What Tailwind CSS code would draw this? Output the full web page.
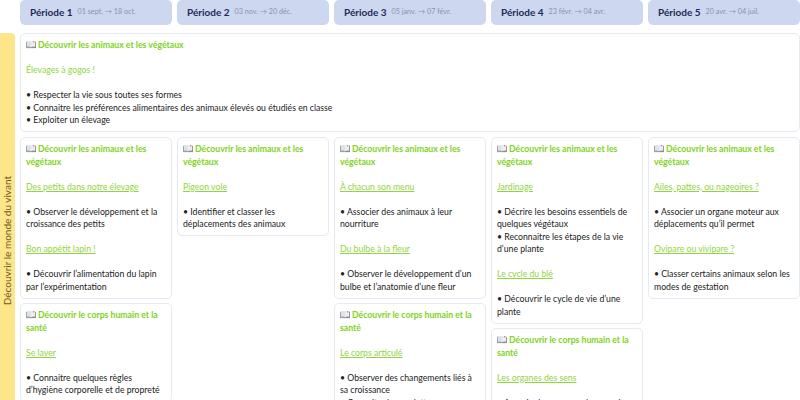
<!DOCTYPE html>
<html lang="fr">
<head>
    <meta charset="UTF-8">
    <title>Programmation</title>
    <script src="https://cdn.jsdelivr.net/npm/@tailwindcss/browser@4"></script>
</head>
<body class="bg-white h-[400px] overflow-hidden font-['Lato',sans-serif] text-[8.7px] leading-[12.5px] text-[#222]">
    <!-- periodes -->
    <div class="grid grid-cols-[15px_repeat(5,152px)] gap-[5px] h-[25px] mb-[8px]">
        <div></div>
        <div class="bg-[#cdd7ef] rounded-[5px] flex items-center gap-[5px] pl-[10px]"><span class="text-[10px] font-bold text-[#1e2a5a]">Période 1</span><span class="text-[7.2px] text-[#8a93ab]">01 sept. → 18 oct.</span></div>
        <div class="bg-[#cdd7ef] rounded-[5px] flex items-center gap-[5px] pl-[10px]"><span class="text-[10px] font-bold text-[#1e2a5a]">Période 2</span><span class="text-[7.2px] text-[#8a93ab]">03 nov. → 20 déc.</span></div>
        <div class="bg-[#cdd7ef] rounded-[5px] flex items-center gap-[5px] pl-[10px]"><span class="text-[10px] font-bold text-[#1e2a5a]">Période 3</span><span class="text-[7.2px] text-[#8a93ab]">05 janv. → 07 févr.</span></div>
        <div class="bg-[#cdd7ef] rounded-[5px] flex items-center gap-[5px] pl-[10px]"><span class="text-[10px] font-bold text-[#1e2a5a]">Période 4</span><span class="text-[7.2px] text-[#8a93ab]">23 févr. → 04 avr.</span></div>
        <div class="bg-[#cdd7ef] rounded-[5px] flex items-center gap-[5px] pl-[10px]"><span class="text-[10px] font-bold text-[#1e2a5a]">Période 5</span><span class="text-[7.2px] text-[#8a93ab]">20 avr. → 04 juil.</span></div>
    </div>

    <div class="flex gap-[5px]">
        <div class="w-[15px] h-[416px] shrink-0 bg-[#fde58a] rounded-r-[4px] flex items-center justify-center">
            <span class="[writing-mode:vertical-rl] rotate-180 text-[10px] text-[#6b5a1e] whitespace-nowrap">Découvrir le monde du vivant</span>
        </div>
        <div class="w-[780px] flex flex-col gap-[5px]">
            <div class="bg-white border border-[#e6e8f4] rounded-[5px] p-[5px] h-[99px]">
                <div class="font-bold text-[#7ed321]"><svg class="inline-block align-[-1px] mr-[2px]" width="10" height="9" viewBox="0 0 11 9"><path d="M0 1.500h5.500v7H0z" fill="#9aa0a6"/><path d="M5.500 1.500H11v7H5.500z" fill="#8a9096"/><path d="M1 .8c1.700-.4 3.500-.2 4.500.7v6c-1-.8-2.800-1-4.500-.6z" fill="#dfe3e8"/><path d="M10 .8c-1.700-.4-3.500-.2-4.500.7v6c1-.8 2.800-1 4.500-.6z" fill="#eceff2"/><path d="M8 .6h1v2l-.5-.5-.5.5z" fill="#d9534f"/></svg>Découvrir les animaux et les végétaux</div>
                <div class="mt-[12.500px] text-[#8fd63e]">Élevages à gogos !</div>
                <div class="mt-[12.500px]">• Respecter la vie sous toutes ses formes<br>• Connaitre les préférences alimentaires des animaux élevés ou étudiés en classe<br>• Exploiter un élevage</div>
            </div>
            <div class="grid grid-cols-[repeat(5,152px)] gap-[5px] items-start">
                <div class="flex flex-col gap-[4.500px]">
                    <div class="border border-[#e6e8f4] rounded-[5px] px-[5px] pt-[5px] pb-[4.500px]">
                        <div class="font-bold text-[#7ed321]"><svg class="inline-block align-[-1px] mr-[2px]" width="10" height="9" viewBox="0 0 11 9"><path d="M0 1.500h5.500v7H0z" fill="#9aa0a6"/><path d="M5.500 1.500H11v7H5.500z" fill="#8a9096"/><path d="M1 .8c1.700-.4 3.500-.2 4.500.7v6c-1-.8-2.800-1-4.500-.6z" fill="#dfe3e8"/><path d="M10 .8c-1.700-.4-3.500-.2-4.500.7v6c1-.8 2.800-1 4.500-.6z" fill="#eceff2"/><path d="M8 .6h1v2l-.5-.5-.5.5z" fill="#d9534f"/></svg>Découvrir les animaux et les végétaux</div>
                        <div class="mt-[12.500px] text-[#8fd63e] underline">Des petits dans notre élevage</div>
                        <div class="mt-[12.500px]">• Observer le développement et la croissance des petits</div>
                        <div class="mt-[12.500px] text-[#8fd63e] underline">Bon appétit lapin !</div>
                        <div class="mt-[12.500px]">• Découvrir l’alimentation du lapin par l’expérimentation</div>
                    </div>
                    <div class="border border-[#e6e8f4] rounded-[5px] px-[5px] pt-[5px] pb-[4.500px]">
                        <div class="font-bold text-[#7ed321]"><svg class="inline-block align-[-1px] mr-[2px]" width="10" height="9" viewBox="0 0 11 9"><path d="M0 1.500h5.500v7H0z" fill="#9aa0a6"/><path d="M5.500 1.500H11v7H5.500z" fill="#8a9096"/><path d="M1 .8c1.700-.4 3.500-.2 4.500.7v6c-1-.8-2.800-1-4.500-.6z" fill="#dfe3e8"/><path d="M10 .8c-1.700-.4-3.500-.2-4.500.7v6c1-.8 2.800-1 4.500-.6z" fill="#eceff2"/><path d="M8 .6h1v2l-.5-.5-.5.5z" fill="#d9534f"/></svg>Découvrir le corps humain et la santé</div>
                        <div class="mt-[12.500px] text-[#8fd63e] underline">Se laver</div>
                        <div class="mt-[12.500px]">• Connaitre quelques règles d’hygiène corporelle et de propreté</div>
                    </div>
                </div>
                <div class="flex flex-col gap-[4.500px]">
                    <div class="border border-[#e6e8f4] rounded-[5px] px-[5px] pt-[5px] pb-[4.500px]">
                        <div class="font-bold text-[#7ed321]"><svg class="inline-block align-[-1px] mr-[2px]" width="10" height="9" viewBox="0 0 11 9"><path d="M0 1.500h5.500v7H0z" fill="#9aa0a6"/><path d="M5.500 1.500H11v7H5.500z" fill="#8a9096"/><path d="M1 .8c1.700-.4 3.500-.2 4.500.7v6c-1-.8-2.800-1-4.500-.6z" fill="#dfe3e8"/><path d="M10 .8c-1.700-.4-3.500-.2-4.500.7v6c1-.8 2.800-1 4.500-.6z" fill="#eceff2"/><path d="M8 .6h1v2l-.5-.5-.5.5z" fill="#d9534f"/></svg>Découvrir les animaux et les végétaux</div>
                        <div class="mt-[12.500px] text-[#8fd63e] underline">Pigeon vole</div>
                        <div class="mt-[12.500px]">• Identifier et classer les déplacements des animaux</div>
                    </div>
                </div>
                <div class="flex flex-col gap-[4.500px]">
                    <div class="border border-[#e6e8f4] rounded-[5px] px-[5px] pt-[5px] pb-[4.500px]">
                        <div class="font-bold text-[#7ed321]"><svg class="inline-block align-[-1px] mr-[2px]" width="10" height="9" viewBox="0 0 11 9"><path d="M0 1.500h5.500v7H0z" fill="#9aa0a6"/><path d="M5.500 1.500H11v7H5.500z" fill="#8a9096"/><path d="M1 .8c1.700-.4 3.500-.2 4.500.7v6c-1-.8-2.800-1-4.500-.6z" fill="#dfe3e8"/><path d="M10 .8c-1.700-.4-3.500-.2-4.500.7v6c1-.8 2.800-1 4.500-.6z" fill="#eceff2"/><path d="M8 .6h1v2l-.5-.5-.5.5z" fill="#d9534f"/></svg>Découvrir les animaux et les végétaux</div>
                        <div class="mt-[12.500px] text-[#8fd63e] underline">À chacun son menu</div>
                        <div class="mt-[12.500px]">• Associer des animaux à leur nourriture</div>
                        <div class="mt-[12.500px] text-[#8fd63e] underline">Du bulbe à la fleur</div>
                        <div class="mt-[12.500px]">• Observer le développement d’un bulbe et l’anatomie d’une fleur</div>
                    </div>
                    <div class="border border-[#e6e8f4] rounded-[5px] px-[5px] pt-[5px] pb-[4.500px]">
                        <div class="font-bold text-[#7ed321]"><svg class="inline-block align-[-1px] mr-[2px]" width="10" height="9" viewBox="0 0 11 9"><path d="M0 1.500h5.500v7H0z" fill="#9aa0a6"/><path d="M5.500 1.500H11v7H5.500z" fill="#8a9096"/><path d="M1 .8c1.700-.4 3.500-.2 4.500.7v6c-1-.8-2.800-1-4.500-.6z" fill="#dfe3e8"/><path d="M10 .8c-1.700-.4-3.500-.2-4.500.7v6c1-.8 2.800-1 4.500-.6z" fill="#eceff2"/><path d="M8 .6h1v2l-.5-.5-.5.5z" fill="#d9534f"/></svg>Découvrir le corps humain et la santé</div>
                        <div class="mt-[12.500px] text-[#8fd63e] underline">Le corps articulé</div>
                        <div class="mt-[12.500px]">• Observer des changements liés à sa croissance<br>• Connaitre le squelette</div>
                    </div>
                </div>
                <div class="flex flex-col gap-[4.500px]">
                    <div class="border border-[#e6e8f4] rounded-[5px] px-[5px] pt-[5px] pb-[4.500px]">
                        <div class="font-bold text-[#7ed321]"><svg class="inline-block align-[-1px] mr-[2px]" width="10" height="9" viewBox="0 0 11 9"><path d="M0 1.500h5.500v7H0z" fill="#9aa0a6"/><path d="M5.500 1.500H11v7H5.500z" fill="#8a9096"/><path d="M1 .8c1.700-.4 3.500-.2 4.500.7v6c-1-.8-2.800-1-4.500-.6z" fill="#dfe3e8"/><path d="M10 .8c-1.700-.4-3.500-.2-4.500.7v6c1-.8 2.800-1 4.500-.6z" fill="#eceff2"/><path d="M8 .6h1v2l-.5-.5-.5.5z" fill="#d9534f"/></svg>Découvrir les animaux et les végétaux</div>
                        <div class="mt-[12.500px] text-[#8fd63e] underline">Jardinage</div>
                        <div class="mt-[12.500px]">• Décrire les besoins essentiels de quelques végétaux<br>• Reconnaitre les étapes de la vie d’une plante</div>
                        <div class="mt-[12.500px] text-[#8fd63e] underline">Le cycle du blé</div>
                        <div class="mt-[12.500px]">• Découvrir le cycle de vie d’une plante</div>
                    </div>
                    <div class="border border-[#e6e8f4] rounded-[5px] px-[5px] pt-[5px] pb-[4.500px]">
                        <div class="font-bold text-[#7ed321]"><svg class="inline-block align-[-1px] mr-[2px]" width="10" height="9" viewBox="0 0 11 9"><path d="M0 1.500h5.500v7H0z" fill="#9aa0a6"/><path d="M5.500 1.500H11v7H5.500z" fill="#8a9096"/><path d="M1 .8c1.700-.4 3.500-.2 4.500.7v6c-1-.8-2.800-1-4.500-.6z" fill="#dfe3e8"/><path d="M10 .8c-1.700-.4-3.500-.2-4.500.7v6c1-.8 2.800-1 4.500-.6z" fill="#eceff2"/><path d="M8 .6h1v2l-.5-.5-.5.5z" fill="#d9534f"/></svg>Découvrir le corps humain et la santé</div>
                        <div class="mt-[12.500px] text-[#8fd63e] underline">Les organes des sens</div>
                        <div class="mt-[12.500px]">• Associer les organes des sens à leurs</div>
                    </div>
                </div>
                <div class="flex flex-col gap-[4.500px]">
                    <div class="border border-[#e6e8f4] rounded-[5px] px-[5px] pt-[5px] pb-[4.500px]">
                        <div class="font-bold text-[#7ed321]"><svg class="inline-block align-[-1px] mr-[2px]" width="10" height="9" viewBox="0 0 11 9"><path d="M0 1.500h5.500v7H0z" fill="#9aa0a6"/><path d="M5.500 1.500H11v7H5.500z" fill="#8a9096"/><path d="M1 .8c1.700-.4 3.500-.2 4.500.7v6c-1-.8-2.800-1-4.500-.6z" fill="#dfe3e8"/><path d="M10 .8c-1.700-.4-3.500-.2-4.500.7v6c1-.8 2.800-1 4.500-.6z" fill="#eceff2"/><path d="M8 .6h1v2l-.5-.5-.5.5z" fill="#d9534f"/></svg>Découvrir les animaux et les végétaux</div>
                        <div class="mt-[12.500px] text-[#8fd63e] underline">Ailes, pattes, ou nageoires ?</div>
                        <div class="mt-[12.500px]">• Associer un organe moteur aux déplacements qu’il permet</div>
                        <div class="mt-[12.500px] text-[#8fd63e] underline">Ovipare ou vivipare ?</div>
                        <div class="mt-[12.500px]">• Classer certains animaux selon les modes de gestation</div>
                    </div>
                </div>
            </div>
        </div>
    </div>
</body>
</html>
